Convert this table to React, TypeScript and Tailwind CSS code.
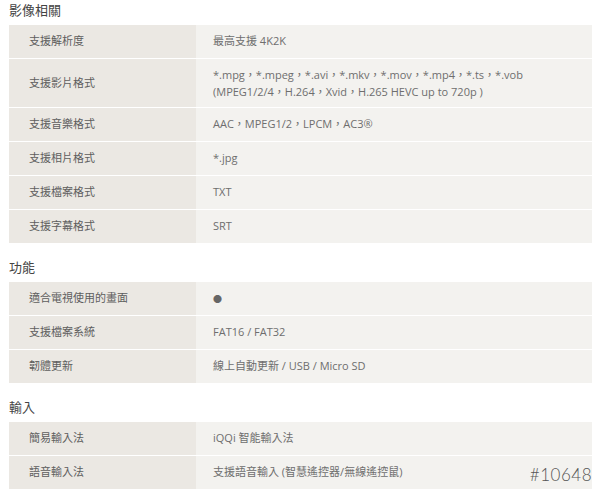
const sections = [
  {
    title: "影像相關",
    rows: [
      { label: "支援解析度", value: ["最高支援 4K2K"] },
      {
        label: "支援影片格式",
        value: [
          "*.mpg，*.mpeg，*.avi，*.mkv，*.mov，*.mp4，*.ts，*.vob",
          "(MPEG1/2/4，H.264，Xvid，H.265 HEVC up to 720p )",
        ],
      },
      { label: "支援音樂格式", value: ["AAC，MPEG1/2，LPCM，AC3®"] },
      { label: "支援相片格式", value: ["*.jpg"] },
      { label: "支援檔案格式", value: ["TXT"] },
      { label: "支援字幕格式", value: ["SRT"] },
    ],
  },
  {
    title: "功能",
    rows: [
      { label: "適合電視使用的畫面", value: ["●"] },
      { label: "支援檔案系統", value: ["FAT16 / FAT32"] },
      { label: "韌體更新", value: ["線上自動更新 / USB / Micro SD"] },
    ],
  },
  {
    title: "輸入",
    rows: [
      { label: "簡易輸入法", value: ["iQQi 智能輸入法"] },
      { label: "語音輸入法", value: ["支援語音輸入 (智慧遙控器/無線遙控鼠)"] },
    ],
  },
];

export default function App() {
  return (
    <div className="relative h-[495px] w-[600px] overflow-hidden bg-white pl-[9px] pr-[8px] font-['Open_Sans','Noto_Sans_CJK_TC',sans-serif]">
      {sections.map((section, i) => (
        <section key={section.title} className={i > 0 ? "mt-[14px]" : ""}>
          <h2 className="pb-[5px] text-[13px] leading-[20px] text-[#444]">
            {section.title}
          </h2>
          <div className="flex flex-col">
            {section.rows.map((row, j) => (
              <div
                key={row.label}
                className={
                  "flex text-[11px] " +
                  (j < section.rows.length - 1 ? "border-b border-white" : "")
                }
              >
                <div className="flex w-[187px] shrink-0 items-center bg-[#ebe8e3] pl-[20px] text-[#5e5e5e]">
                  {row.label}
                </div>
                <div
                  className={
                    "flex flex-1 flex-col justify-center bg-[#f3f2ef] pl-[17px] text-[#6e6e6e] " +
                    (row.value.length > 1 ? "h-[48px] leading-[17px]" : "h-[33px]")
                  }
                >
                  {row.value.map((line) => (
                    <div key={line} className={line === "●" ? "text-[9px] text-[#666]" : ""}>
                      {line}
                    </div>
                  ))}
                </div>
              </div>
            ))}
          </div>
        </section>
      ))}
      <div className="absolute right-[8px] top-[462px] font-['Lato',sans-serif] text-[17px] font-light tracking-[0.5px] text-[#555]">
        #10648
      </div>
    </div>
  );
}
